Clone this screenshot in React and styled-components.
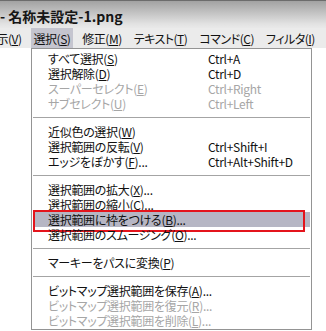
import React from "react";
import styled, { createGlobalStyle } from "styled-components";

const GlobalStyle = createGlobalStyle`
  html, body {
    margin: 0;
    padding: 0;
    background: #fff;
    overflow: hidden;
  }
  body {
    font-family: "Noto Sans CJK JP", "Noto Sans", sans-serif;
    font-feature-settings: "palt" 1;
  }
`;

const menus = [
  { label: "表示", key: "V" },
  { label: "選択", key: "S", open: true },
  { label: "修正", key: "M" },
  { label: "テキスト", key: "T" },
  { label: "コマンド", key: "C" },
  { label: "フィルタ", key: "I" },
];

// null = separator
const items = [
  { label: "すべて選択", key: "S", sc: "Ctrl+A" },
  { label: "選択解除", key: "D", sc: "Ctrl+D" },
  { label: "スーパーセレクト", key: "E", sc: "Ctrl+Right", off: true },
  { label: "サブセレクト", key: "U", sc: "Ctrl+Left", off: true },
  null,
  { label: "近似色の選択", key: "W" },
  { label: "選択範囲の反転", key: "V", sc: "Ctrl+Shift+I" },
  { label: "エッジをぼかす", key: "F", dots: true, sc: "Ctrl+Alt+Shift+D" },
  null,
  { label: "選択範囲の拡大", key: "X", dots: true },
  { label: "選択範囲の縮小", key: "C", dots: true },
  { label: "選択範囲に枠をつける", key: "B", dots: true, hot: true },
  { label: "選択範囲のスムージング", key: "O", dots: true },
  null,
  { label: "マーキーをパスに変換", key: "P" },
  null,
  { label: "ビットマップ選択範囲を保存", key: "A", dots: true },
  { label: "ビットマップ選択範囲を復元", key: "R", dots: true, off: true },
  { label: "ビットマップ選択範囲を削除", key: "L", dots: true, off: true },
];

const Screen = styled.div`
  width: 326px;
  height: 331px;
  overflow: hidden;
  background: #fff;
`;

const TitleBar = styled.div`
  height: 28px;
  box-sizing: border-box;
  border-top: 1px solid #6c6c6c;
  background: linear-gradient(#a2a2a2 0%, #c4c4c4 45%, #e2e2e2 85%, #e9e9e9 100%);
  display: flex;
  align-items: center;
  padding-top: 3px;
  font-size: 14px;
  font-weight: 700;
  color: #161616;
  white-space: nowrap;
`;

const MenuBar = styled.div`
  height: 20px;
  background: #ebebeb;
  display: flex;
  gap: 6px;
  margin-left: -18px;
  font-size: 12px;
  letter-spacing: -0.5px;
  color: #111;
  white-space: nowrap;
`;

const MenuTitle = styled.div`
  display: flex;
  align-items: center;
  padding: 0 3px;
  background: ${(p) => (p.$open ? "#c5c5cf" : "transparent")};
`;

const Key = styled.u`
  text-decoration-thickness: 1px;
  text-underline-offset: 1px;
`;

const Dropdown = styled.div`
  margin-left: 31px;
  width: 281px;
  box-sizing: border-box;
  border: 1px solid #949494;
  padding: 2px 1px 1px;
  background: #fff;
  font-size: 12px;
  letter-spacing: -0.3px;
`;

const Row = styled.div`
  position: relative;
  height: 15px;
  line-height: 15px;
  display: grid;
  grid-template-columns: 160px auto;
  padding-left: 15px;
  white-space: nowrap;
  color: ${(p) => (p.$off ? "#a6a6a6" : "#111")};
  background: ${(p) => (p.$hot ? "#b6b6c4" : "transparent")};

  ${(p) =>
    p.$hot &&
    `
    &::after {
      content: "";
      position: absolute;
      left: 0;
      right: 5px;
      top: -2px;
      bottom: -5px;
      border: 2px solid #e4141c;
    }
  `}
`;

const Separator = styled.div`
  height: 13px;
  display: flex;
  align-items: center;

  &::before {
    content: "";
    flex: 1;
    height: 1px;
    background: #a4a4a4;
  }
`;

const Label = ({ label, k, dots }) => (
  <span>
    {label}(<Key>{k}</Key>){dots ? "..." : ""}
  </span>
);

export default function App() {
  return (
    <Screen>
      <GlobalStyle />
      <TitleBar>- 名称未設定-1.png</TitleBar>
      <MenuBar>
        {menus.map((m) => (
          <MenuTitle key={m.label} $open={m.open}>
            <Label label={m.label} k={m.key} />
          </MenuTitle>
        ))}
      </MenuBar>
      <Dropdown>
        {items.map((it, i) =>
          it ? (
            <Row key={i} $off={it.off} $hot={it.hot}>
              <Label label={it.label} k={it.key} dots={it.dots} />
              <span>{it.sc || ""}</span>
            </Row>
          ) : (
            <Separator key={i} />
          )
        )}
      </Dropdown>
    </Screen>
  );
}
